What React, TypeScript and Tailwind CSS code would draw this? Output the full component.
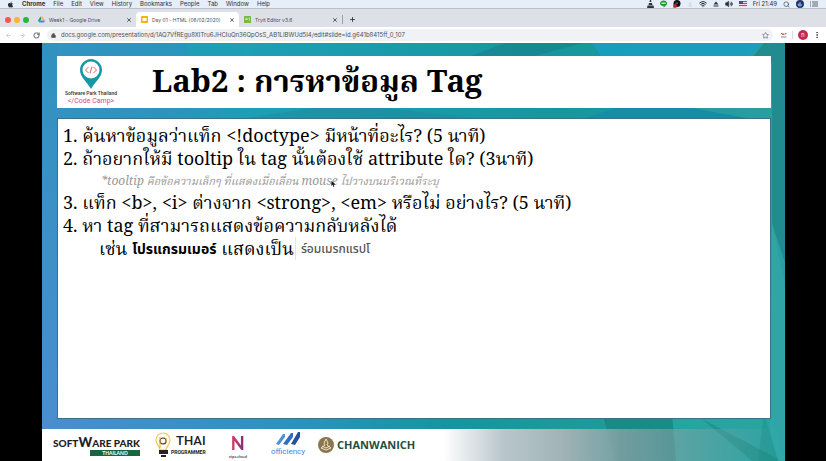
import React from "react";
import { ArrowLeft, ArrowRight, Bluetooth, Lock, MoreVertical, Plus, RotateCw, Search, Star, Volume2, Wifi, X } from "lucide-react";
import { FaApple } from "react-icons/fa";

const menus = ["File", "Edit", "View", "History", "Bookmarks", "People", "Tab", "Window", "Help"];

function MenuBar() {
  return (
    <header className="flex h-2 items-center justify-between bg-[#e6eef9] pr-2 pl-[7px] text-[6px] leading-[8px] text-[#2c2f36]">
      <nav aria-label="Menu bar" className="flex items-center gap-2">
        <FaApple className="h-[7px] w-[7px]" />
        <button className="font-bold">Chrome</button>
        {menus.map((m) => (
          <button key={m}>{m}</button>
        ))}
      </nav>
      <div className="flex items-center gap-[6px]">
        <svg className="h-[8px] w-[7px]" viewBox="0 0 14 16" fill="#33353b">
          <path d="M6 0h2l1 4H5zM4 6h6l1 4H3zM1 11h12l1 5H0z" />
        </svg>
        <svg className="h-[8px] w-[7px]" viewBox="0 0 14 16" fill="#15a02c">
          <path d="M7 1c4 0 7 2.500 7 6 0 3-3 5-7 8v-3C3 12 0 10 0 7s3-6 7-6z" />
          <path d="M3 5h8v3H3z" fill="#bfe8c4" />
        </svg>
        <svg className="h-[8px] w-[8px]" viewBox="0 0 16 16">
          <circle cx="8" cy="7" r="7" fill="#111" />
          <path d="M5 5h5v3H5z" fill="#555" />
          <circle cx="4" cy="12" r="4" fill="#c6262b" />
        </svg>
        <Bluetooth className="h-[7px] w-[6px] text-[#c3cad4]" />
        <Wifi className="h-[8px] w-[8px]" strokeWidth={3} />
        <svg className="h-[6px] w-[6px]" viewBox="0 0 12 12" fill="#33353b">
          <path d="M6 1l5 6H1zM1 9h10v2H1z" />
        </svg>
        <Volume2 className="h-[8px] w-[8px]" fill="currentColor" />
        <svg className="h-[6px] w-[8px]" viewBox="0 0 16 12">
          <path fill="#f2dfe2" d="M0 0h16v12H0z" />
          <path fill="#c8424c" d="M0 0h16v2H0zM0 4h16v2H0zM0 8h16v2H0z" />
          <path fill="#39508f" d="M0 0h8v6H0z" />
        </svg>
        <span>Fri 21:49</span>
        <Search className="h-[7px] w-[7px]" />
        <svg className="h-[8px] w-[8px]" viewBox="0 0 16 16">
          <circle cx="8" cy="8" r="8" fill="#23355f" />
          <path d="M3 9c3-6 7 4 10-2-1 7-8 8-10 2z" fill="#58b8ea" />
          <circle cx="8" cy="6" r="2" fill="#b66bd2" />
        </svg>
        <svg className="h-[6px] w-[8px]" viewBox="0 0 16 12" stroke="#33353b" strokeWidth="1.500">
          <path d="M0 2h2M4 2h12M0 6h2M5 6h11M0 10h2M4 10h12" />
        </svg>
      </div>
    </header>
  );
}

function DriveIcon() {
  return (
    <svg className="h-[7px] w-[7px] shrink-0" viewBox="0 0 14 14">
      <path fill="#1fa463" d="M5 1l2 4-4.500 8L0 9z" />
      <path fill="#fbc02d" d="M5 1h4l5 8h-4z" />
      <path fill="#4285f4" d="M4.500 9H14l-2 4H2.500z" />
    </svg>
  );
}

function SlidesIcon() {
  return (
    <svg className="h-[7px] w-[7px] shrink-0" viewBox="0 0 14 14">
      <rect width="14" height="14" rx="1.500" fill="#f4b400" />
      <path fill="#fff" d="M3 4h8v6H3z" />
    </svg>
  );
}

function TryitIcon() {
  return (
    <svg className="h-[7px] w-[7px] shrink-0" viewBox="0 0 14 14">
      <rect width="14" height="14" rx="1" fill="#77b843" />
      <path d="M2 4l1.500 4L5 4l1.500 4L8 4M9 4h3l-2 2 2 2-3 1" fill="none" stroke="#e8f6dc" />
    </svg>
  );
}

function Tab({ icon, title, active = false }: { icon: React.ReactNode; title: string; active?: boolean }) {
  return (
    <div
      role="tab"
      aria-selected={active}
      className={
        active
          ? "flex h-[15px] w-[103px] items-center gap-1 rounded-t bg-white pr-1 pl-[5px]"
          : "flex h-[15px] w-[103px] items-center gap-1 pr-1 pl-[5px]"
      }
    >
      {icon}
      <span className="min-w-0 flex-1 whitespace-nowrap text-[#4b4f57]">{title}</span>
      <button aria-label={"Close " + title}>
        <X className="h-[6px] w-[6px] text-[#333]" strokeWidth={3} />
      </button>
    </div>
  );
}

function TabStrip() {
  return (
    <div className="flex h-[19px] items-end border-t border-[#b9bfcb] bg-[#dde0e7] pl-[5px] text-[5px] leading-[8px]">
      <div className="flex h-[15px] w-7 items-center gap-[3px]">
        <span className="h-[6px] w-[6px] rounded-full bg-[#f4574f]" />
        <span className="h-[6px] w-[6px] rounded-full bg-[#f6b62d]" />
        <span className="h-[6px] w-[6px] rounded-full bg-[#25b83b]" />
      </div>
      <div role="tablist" className="flex">
        <Tab icon={<DriveIcon />} title="Week1 - Google Drive" />
        <Tab icon={<SlidesIcon />} title="Day 01 - HTML (06/02/2020)" active />
        <Tab icon={<TryitIcon />} title="Tryit Editor v3.6" />
      </div>
      <div className="flex h-[15px] items-center gap-[6px]">
        <span className="h-[9px] w-px bg-[#9aa0aa]" />
        <button aria-label="New tab">
          <Plus className="h-[7px] w-[7px] text-[#333]" strokeWidth={3} />
        </button>
      </div>
    </div>
  );
}

function Toolbar() {
  return (
    <div className="flex h-4 items-center bg-white px-[5px] text-[#4b4f57]">
      <div className="flex w-[42px] items-center gap-[7px]">
        <button aria-label="Back"><ArrowLeft className="h-[7px] w-[7px] text-[#b4b7bc]" /></button>
        <button aria-label="Forward"><ArrowRight className="h-[7px] w-[7px] text-[#b4b7bc]" /></button>
        <button aria-label="Reload"><RotateCw className="h-[7px] w-[7px]" strokeWidth={3} /></button>
      </div>
      <div className="flex h-[12px] flex-1 items-center gap-[5px] rounded-full bg-[#f0f2f5] pr-1 pl-1">
        <Lock className="h-[5px] w-[5px]" fill="currentColor" strokeWidth={3} />
        <input
          aria-label="Address"
          className="h-[10px] min-w-0 flex-1 bg-transparent text-[6px] leading-[10px] text-[#4b4f57] outline-none"
          defaultValue="docs.google.com/presentation/d/1AQ7VfREgu8XITru6JHCIuQn36QpOsS_AB1LIBWUd5I4/edit#slide=id.g641b8415ff_0_107"
        />
        <button aria-label="Bookmark this page"><Star className="h-[7px] w-[7px]" /></button>
      </div>
      <div className="flex items-center gap-[5px] pl-2">
        <svg className="h-[5px] w-[6px]" viewBox="0 0 12 10">
          <path d="M0 1h3v3M5 1v3M8 4V1h3" stroke="#c9373c" strokeWidth="1.500" fill="none" />
          <path d="M0 8h11" stroke="#888" strokeWidth="2" />
        </svg>
        <span className="h-2 w-px bg-[#d9dbe0]" />
        <button className="h-[10px] w-[10px] rounded-full bg-[#c32b55] text-[6px] leading-[10px] text-white">ก</button>
        <button aria-label="More"><MoreVertical className="h-2 w-2" strokeWidth={3} /></button>
      </div>
    </div>
  );
}

function Backdrop() {
  return (
    <svg className="absolute inset-0 h-full w-full" viewBox="0 0 743 418" preserveAspectRatio="none" aria-hidden="true">
      <defs>
        <linearGradient id="base" x1="0" x2="1">
          <stop offset="0" stopColor="#3492c2" />
          <stop offset="0.180" stopColor="#2a95bd" />
          <stop offset="0.300" stopColor="#1c9fb4" />
          <stop offset="0.700" stopColor="#17969e" />
          <stop offset="1" stopColor="#2b9fa0" />
        </linearGradient>
        <linearGradient id="left" x1="0" x2="0" y1="0" y2="1">
          <stop offset="0" stopColor="#3192be" />
          <stop offset="1" stopColor="#4c8dd0" />
        </linearGradient>
        <linearGradient id="low" x1="0" x2="1">
          <stop offset="0" stopColor="#4c8dd0" />
          <stop offset="0.350" stopColor="#2a93bd" />
          <stop offset="0.560" stopColor="#14969c" />
          <stop offset="1" stopColor="#2a9f9f" />
        </linearGradient>
      </defs>
      <path fill="url(#base)" d="M0 0h743v418H0z" />
      <path fill="url(#left)" d="M0 0h16v418H0z" />
      <path fill="#1ba3b4" d="M143 0h80l-20 20h-54z" opacity="0.600" />
      <path fill="#23829a" d="M200 76L300 60l140 16z" opacity="0.400" />
      <path fill="#17818c" d="M463 0l-42 16h60l60-16z" opacity="0.600" />
      <path fill="#17a0c4" d="M550 0h172l-16 14H560z" opacity="0.800" />
      <path fill="#1d7f86" d="M722 0h21v220l-13-40V20h-24z" opacity="0.600" />
      <path fill="#168da6" d="M540 76l60-20 110 20z" />
      <path fill="url(#low)" d="M0 370h728v48H0z" />
      <path fill="#188380" d="M560 370h70l4 48h-60z" opacity="0.700" />
      <path fill="#2aa9a5" d="M630 370h98l15 48H634z" opacity="0.500" />
      <path fill="#17857e" d="M660 376l80 42h-30l-50-42z" opacity="0.500" />
      <path fill="#17857e" d="M722 370l14 48h-20z" opacity="0.300" />
      <path fill="#35aaae" d="M730 180l13 60v178h-7l-8-30z" opacity="0.500" />
    </svg>
  );
}

function CampLogo() {
  return (
    <div className="flex w-[68px] flex-col items-center font-['Roboto',sans-serif]">
      <svg className="h-[30px] w-[22px]" viewBox="0 0 22 30">
        <path fill="#1597a8" d="M11 0C5 0 0 5 0 11c0 7 7 12 11 19 4-7 11-12 11-19C22 5 17 0 11 0z" />
        <circle cx="11" cy="11" r="8.500" fill="#fff" />
        <path d="M8.500 8L5.500 11l3 3M13.500 8l3 3-3 3M12 7.500l-2 7" fill="none" stroke="#e0625f" />
      </svg>
      <span className="text-[5px] leading-[8px] font-medium text-[#333]">Software Park Thailand</span>
      <span className="text-[7px] leading-[8px] text-[#dc4585]">&lt;/Code Camp&gt;</span>
    </div>
  );
}

function Sponsors() {
  return (
    <footer className="relative flex h-8 items-center bg-[linear-gradient(to_right,#fff_54%,#b9c7cc_62%,#a0b3b6_70%,#8ea3a5c0_78%,#8ea3a580_86%,transparent_99%)] pl-[10px] font-['Lato',sans-serif]">
      <div className="flex w-[88px] flex-col items-end">
        <span className="text-[10px] leading-[14px] font-black whitespace-nowrap text-[#222]">
          SOFT<span className="text-[13px]">W</span>ARE PARK
        </span>
        <span className="h-[6px] w-[50px] bg-[#17663f] text-center text-[5px] leading-[6px] font-bold text-white">THAILAND</span>
      </div>
      <div className="ml-[15px] flex items-center">
        <svg className="h-[26px] w-4" viewBox="0 0 16 26">
          <path d="M5 18c0-4-4-5-4-10a7 7 0 0114 0c0 5-4 6-4 10z" fill="#fffdf0" stroke="#edc94b" strokeWidth="1.200" />
          <circle cx="8" cy="9" r="3" fill="none" stroke="#333" strokeWidth="1.200" />
          <path d="M5 5v11M11 6v5" stroke="#e2a33a" />
          <path d="M4 18h9v4H4zM6 23h5v2H6z" fill="#222" />
        </svg>
        <div className="flex flex-col items-end font-['Roboto',sans-serif] text-[#222]">
          <span className="text-[13px] leading-[14px] font-medium">THAI</span>
          <span className="text-[5px] leading-[8px] font-bold">PROGRAMMER</span>
        </div>
      </div>
      <div className="ml-[23px] flex flex-col items-center">
        <span className="bg-linear-to-r from-[#e23a62] to-[#7b2a78] bg-clip-text text-[18px] leading-[22px] font-black text-transparent">N</span>
        <span className="text-[4px] leading-[5px] font-bold text-[#555]">nipa.cloud</span>
      </div>
      <div className="ml-[24px] flex flex-col items-center">
        <svg className="h-[14px] w-6" viewBox="0 0 24 14">
          <path d="M0 12L7 2h2v3L3 13z" fill="#4d93dc" />
          <path d="M7 12l8-11h2v4l-6 8z" fill="#2f6fc0" />
          <path d="M15 12l7-12h2v5l-5 8z" fill="#234f9c" />
        </svg>
        <span className="font-['Roboto',sans-serif] text-[8px] leading-[12px] text-[#3f86d6]">officiency</span>
      </div>
      <div className="ml-[13px] flex items-center gap-[3px]">
        <svg className="h-4 w-4" viewBox="0 0 16 16">
          <circle cx="8" cy="8" r="8" fill="#8a7650" />
          <path d="M8 2l2 4-1 2 4 3-5 2-5-2 4-3-1-2zM4 9l4 2 4-2" fill="none" stroke="#eee3c5" />
        </svg>
        <span className="font-['Open_Sans',sans-serif] text-[11px] leading-[14px] font-bold text-[#1d5040]">CHANWANICH</span>
      </div>
    </footer>
  );
}

function Slide() {
  return (
    <main className="relative mr-[41px] ml-[42px] flex flex-1 flex-col overflow-hidden">
      <Backdrop />
      <div className="relative flex flex-1 flex-col gap-[10px] pt-[13px] pr-[14px] pb-[10px] pl-[15px] font-['Noto_Serif','DejaVu_Serif','Noto_Serif_Thai',serif] text-black">
        <div className="flex h-[52px] items-center bg-white">
          <CampLogo />
          <h1 className="pb-1 pl-[27px] text-[31px] leading-[40px] font-bold whitespace-nowrap">Lab2 : การหาข้อมูล Tag</h1>
        </div>
        <section className="flex-1 border border-[#3c6f88] bg-white px-[5px] pt-[5px] text-[18px] leading-[23px] whitespace-nowrap">
          <p>1. ค้นหาข้อมูลว่าแท็ก &lt;!doctype&gt; มีหน้าที่อะไร? (5 นาที)</p>
          <p>2. ถ้าอยากให้มี tooltip ใน tag นั้นต้องใช้ attribute ใด? (3นาที)</p>
          <p className="relative pt-px pl-[38px] text-[11px] leading-[20px] text-[#999] italic">
            <span className="text-[12px]">*tooltip</span> คือข้อความเล็กๆ ที่แสดงเมื่อเลื่อน{" "}
            <span className="text-[12px]">mouse</span> ไปวางบนบริเวณที่ระบุ
            <svg className="absolute top-[10px] left-[268px] h-2 w-[5px]" viewBox="0 0 12 16">
              <path d="M1 1v12l3-3 2 5 2-1-2-5h5z" fill="#111" />
            </svg>
          </p>
          <p>3. แท็ก &lt;b&gt;, &lt;i&gt; ต่างจาก &lt;strong&gt;, &lt;em&gt; หรือไม่ อย่างไร? (5 นาที)</p>
          <p>4. หา tag ที่สามารถแสดงข้อความกลับหลังได้</p>
          <p className="flex pl-9">
            เช่น&nbsp;
            <b className="font-['Noto_Sans','Noto_Sans_Thai',sans-serif] text-[14px]">โปรแกรมเมอร์</b>
            &nbsp;แสดงเป็น
            <span className="ml-px border-l border-[#e5e5e5] pl-[5px] font-['Noto_Sans','Noto_Sans_Thai',sans-serif] text-[12px] font-medium text-[#555]">ร์อมเมรกแรปโ</span>
          </p>
        </section>
      </div>
      <Sponsors />
    </main>
  );
}

export default function App() {
  return (
    <div className="flex min-h-screen flex-col bg-black font-['Inter',sans-serif]">
      <MenuBar />
      <TabStrip />
      <Toolbar />
      <Slide />
    </div>
  );
}
